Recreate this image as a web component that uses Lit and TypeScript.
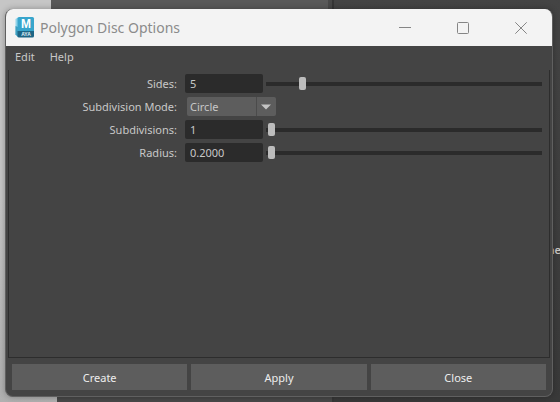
import { LitElement, html, css, svg } from "lit";
import { customElement, property } from "lit/decorators.js";

interface SliderField {
  id: string;
  label: string;
  text: string;
  min: number;
  max: number;
  value: number;
}

const SIDES: SliderField = { id: "sides", label: "Sides:", text: "5", min: 3, max: 20, value: 5 };
const SUBDIVISIONS: SliderField = { id: "subdivisions", label: "Subdivisions:", text: "1", min: 1, max: 10, value: 1 };
const RADIUS: SliderField = { id: "radius", label: "Radius:", text: "0.2000", min: 0, max: 100, value: 0 };

@customElement("slider-row")
export class SliderRow extends LitElement {
  @property({ attribute: false }) field!: SliderField;

  static styles = css`
    :host {
      display: grid;
      grid-template-columns: 168px 78px minmax(0, 1fr);
      align-items: center;
      height: 19px;
    }
    label {
      text-align: right;
    }
    .value {
      box-sizing: border-box;
      width: 78px;
      height: 19px;
      margin-left: 8px;
      padding: 0 5px;
      border: 0;
      border-radius: 2px;
      background: #2b2b2b;
      color: #c8c8c8;
      font: inherit;
      outline: none;
    }
    .slider {
      appearance: none;
      box-sizing: border-box;
      min-width: 0;
      height: 13px;
      margin: 0 0 0 11px;
      padding: 0 2px;
      background: linear-gradient(#2b2b2b, #2b2b2b) center / 100% 4px no-repeat;
      border-radius: 2px;
      outline: none;
    }
    .slider::-webkit-slider-thumb {
      appearance: none;
      width: 7px;
      height: 13px;
      border-radius: 2px;
      background: #bdbdbd;
    }
  `;

  render() {
    const f = this.field;
    return html`
      <label for=${f.id}>${f.label}</label>
      <input class="value" id=${f.id} type="text" .value=${f.text} />
      <input
        class="slider"
        type="range"
        aria-label=${f.label}
        min=${f.min}
        max=${f.max}
        step="any"
        .value=${String(f.value)}
      />
    `;
  }
}

const mayaIcon = svg`
  <svg class="logo" viewBox="0 0 20 21" aria-hidden="true">
    <path d="M0.500 2 L3 0.500 V20 L0.500 17.500 Z" fill="#8fd3ea" />
    <path d="M0.500 9 L3 10 V20 L0.500 17.500 Z" fill="#3f9fc0" />
    <path d="M2.500 1.500 Q2.500 0 4 0 H17.500 Q19 0 19 1.500 V14.500 H2.500 Z" fill="#38a5cc" />
    <path d="M2.500 14 H19 V19 Q19 20.500 17.500 20.500 H4 Q2.500 20.500 2.500 19 Z" fill="#1d6585" />
    <text class="mark" x="11" y="11" text-anchor="middle">M</text>
    <text class="tag" x="11" y="19" text-anchor="middle">AYA</text>
  </svg>
`;

@customElement("app-root")
export class AppRoot extends LitElement {
  static styles = css`
    :host {
      display: flex;
      position: relative;
      box-sizing: border-box;
      min-height: 100vh;
      padding: 9px 7px 5px 5px;
      overflow: hidden;
      font: 11px/15px "Noto Sans", "Open Sans", sans-serif;
      color: #c8c8c8;
    }
    .backdrop {
      position: absolute;
      inset: 0;
      display: flex;
      flex-direction: column;
    }
    .strip {
      display: flex;
      height: 200px;
    }
    .strip.lower {
      flex: 1;
    }
    .pale {
      width: 51px;
      background: #c6c6c6;
    }
    .mid {
      width: 277px;
      background: #595959;
    }
    .seam {
      width: 6px;
      background: linear-gradient(90deg, #484848 60%, #363636 60%);
    }
    .dark {
      flex: 1;
      background: linear-gradient(#444444, #3e3e3e);
    }
    .lower .pale {
      width: 57px;
      background: linear-gradient(#c6c6c6, #b0b0b0);
    }
    .lower .mid {
      width: 271px;
      background: #484848;
    }
    .lower .dark {
      background: linear-gradient(#3e3e3e, #393939);
      text-align: right;
    }
    .peek {
      margin: 42px -1px 0 0;
      font-weight: 600;
    }
    .window {
      position: relative;
      flex: 1;
      min-width: 0;
      display: flex;
      flex-direction: column;
      border: 1px solid #606060;
      border-top: 0;
      border-radius: 8px;
      overflow: hidden;
      background: #444444;
      box-shadow: 0 0 6px rgba(0, 0, 0, 0.3);
    }
    .titlebar {
      display: flex;
      align-items: center;
      height: 37px;
      padding: 0 2px 0 9px;
      background: #f3f3f3;
      color: #8b8b8b;
    }
    .logo {
      width: 20px;
      height: 21px;
    }
    .mark {
      font: 700 12px "Liberation Sans", sans-serif;
      fill: #ffffff;
    }
    .tag {
      font: 700 5px "Liberation Sans", sans-serif;
      fill: #e4f3f9;
    }
    h1 {
      flex: 1;
      margin: 0 0 0 5px;
      font: 400 14px/20px "Noto Sans", sans-serif;
      white-space: nowrap;
    }
    button {
      border: 0;
      padding: 0;
      font: inherit;
      color: inherit;
      background: none;
    }
    .control {
      display: grid;
      place-items: center;
      width: 58px;
      height: 36px;
    }
    .control svg {
      width: 12px;
      height: 12px;
      fill: none;
      stroke: #858585;
    }
    .menus {
      display: flex;
      gap: 15px;
      height: 20px;
      padding: 0 9px 4px;
      align-items: center;
    }
    .options {
      flex: 1;
      display: flex;
      flex-direction: column;
      gap: 4px;
      margin: 0 2px;
      padding: 4px 7px 0 0;
      border: solid #2d2d2d;
      border-width: 0 1px 1px;
    }
    .mode {
      display: grid;
      grid-template-columns: 168px 1fr;
      align-items: center;
      height: 19px;
    }
    .mode label {
      text-align: right;
    }
    .picker {
      position: relative;
      height: 19px;
      margin-left: 10px;
      width: 89px;
    }
    select {
      appearance: none;
      width: 100%;
      height: 19px;
      padding: 0 3px;
      border: 0;
      border-radius: 2px;
      background: linear-gradient(90deg, transparent 69px, #4b4b4b 69px 70px, transparent 70px) #5d5d5d;
      color: inherit;
      font: inherit;
      outline: none;
    }
    .arrow {
      position: absolute;
      top: 7px;
      right: 5px;
      width: 10px;
      height: 6px;
      fill: #c4c4c4;
      pointer-events: none;
    }
    .actions {
      display: grid;
      grid-template-columns: repeat(3, minmax(0, 1fr));
      gap: 4px;
      padding: 6px;
    }
    .actions button {
      height: 26px;
      background: #5d5d5d;
      color: #eeeeee;
    }
  `;

  render() {
    return html`
      <div class="backdrop">
        <div class="strip">
          <div class="pale"></div>
          <div class="mid"></div>
          <div class="seam"></div>
          <div class="dark"></div>
        </div>
        <div class="strip lower">
          <div class="pale"></div>
          <div class="mid"></div>
          <div class="seam"></div>
          <div class="dark"><div class="peek">ne</div></div>
        </div>
      </div>
      <section class="window">
        <header class="titlebar">
          ${mayaIcon}
          <h1>Polygon Disc Options</h1>
          <button class="control" aria-label="Minimize">
            <svg viewBox="0 0 12 12"><path d="M0 5.500H12" /></svg>
          </button>
          <button class="control" aria-label="Maximize">
            <svg viewBox="0 0 12 12"><rect x="0.500" y="0.500" width="11" height="11" rx="1" /></svg>
          </button>
          <button class="control" aria-label="Close window">
            <svg viewBox="0 0 12 12"><path d="M0.300 0.300L11.700 11.700M11.700 0.300L0.300 11.700" /></svg>
          </button>
        </header>
        <nav class="menus">
          <button>Edit</button>
          <button>Help</button>
        </nav>
        <main class="options">
          <slider-row .field=${SIDES}></slider-row>
          <div class="mode">
            <label for="mode">Subdivision Mode:</label>
            <div class="picker">
              <select id="mode">
                <option>Circle</option>
                <option>Quads</option>
                <option>Triangles</option>
              </select>
              <svg class="arrow" viewBox="0 0 10 6"><path d="M0 0.500H10L5 5.500Z" /></svg>
            </div>
          </div>
          <slider-row .field=${SUBDIVISIONS}></slider-row>
          <slider-row .field=${RADIUS}></slider-row>
        </main>
        <footer class="actions">
          <button>Create</button>
          <button>Apply</button>
          <button>Close</button>
        </footer>
      </section>
    `;
  }
}
